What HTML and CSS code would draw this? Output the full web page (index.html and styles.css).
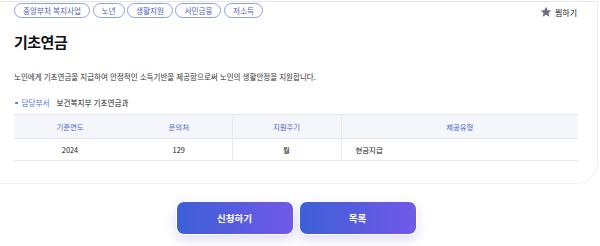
FILE: index.html
```html
<!DOCTYPE html>
<html lang="ko">
<head>
<meta charset="utf-8">
<link rel="stylesheet" href="styles.css">
</head>
<body>
<div class="card">
  <div class="content">
    <div class="top">
      <div class="tags">
        <span class="tag">중앙부처 복지사업</span>
        <span class="tag">노년</span>
        <span class="tag">생활지원</span>
        <span class="tag">서민금융</span>
        <span class="tag">저소득</span>
      </div>
      <div class="fav">
        <svg class="star" viewBox="0 0 24 24" width="12" height="12"><path d="M12 1.5l3.2 7 7.3.7-5.5 4.9 1.6 7.4L12 17.7l-6.6 3.8 1.6-7.4L1.5 9.2l7.3-.7z" fill="#6b6f82"/></svg>
        <span>찜하기</span>
      </div>
    </div>
    <h1 class="title">기초연금</h1>
    <p class="desc">노인에게 기초연금을 지급하여 안정적인 소득기반을 제공함으로써 노인의 생활안정을 지원합니다.</p>
    <div class="dept"><span class="dot"></span><span class="dept-label">담당부서</span><span class="dept-name">보건복지부 기초연금과</span></div>
    <table class="info">
      <colgroup><col class="c1"><col class="c2"><col class="c3"><col class="c4"></colgroup>
      <thead>
        <tr><th>기준연도</th><th>문의처</th><th class="bl">지원주기</th><th class="bl">제공유형</th></tr>
      </thead>
      <tbody>
        <tr><td>2024</td><td>129</td><td class="bl">월</td><td class="bl left">현금지급</td></tr>
      </tbody>
    </table>
  </div>
</div>
<div class="actions">
  <button class="btn">신청하기</button>
  <button class="btn">목록</button>
</div>
</body>
</html>
```

FILE: styles.css
```css
* { box-sizing: border-box; margin: 0; padding: 0; }
html, body { background: #fff; }
body {
  width: 600px;
  height: 246px;
  overflow: hidden;
  font-family: "Noto Sans CJK KR", "Noto Sans", sans-serif;
  color: #222;
}
.card {
  margin-top: 1px;
  width: 598px;
  height: 183px;
  border-top: 1px solid #e4e6ea;
  border-right: 1px solid #eceef2;
  border-bottom: 1px solid #f1f2f5;
  border-bottom-right-radius: 22px;
}
.content {
  padding: 1px 19px 0 14px;
}
.top {
  display: flex;
  justify-content: space-between;
  align-items: flex-start;
}
.tags {
  display: flex;
  gap: 2.5px;
}
.tag {
  display: inline-flex;
  align-items: center;
  height: 15px;
  padding: 0 8px;
  border: 1px solid #8ea1e6;
  border-radius: 8px;
  font-size: 7.6px;
  color: #4c5fb8;
  line-height: 1;
}
.fav {
  display: flex;
  align-items: center;
  gap: 3px;
  margin-top: 3px;
  margin-right: 1px;
  font-size: 8px;
  color: #222;
}
.star { display: block; }
.title {
  margin-top: 14px;
  font-size: 15px;
  font-weight: 700;
  line-height: 20px;
  letter-spacing: -0.5px;
  color: #111;
}
.desc {
  margin-top: 20px;
  font-size: 7.5px;
  line-height: 10px;
  color: #333;
}
.dept {
  display: flex;
  align-items: center;
  margin-top: 16px;
  font-size: 7.6px;
  line-height: 10px;
}
.dot {
  width: 2.5px;
  height: 2.5px;
  border-radius: 50%;
  background: #4a6cf0;
  margin: 0 4px 0 1px;
}
.dept-label { color: #4a6ce8; margin-right: 7px; }
.dept-name { color: #222; }
.info {
  margin-top: 6px;
  width: 564px;
  border-collapse: collapse;
  font-size: 7.4px;
}
.c1 { width: 112px; }
.c2 { width: 106px; }
.c3 { width: 109px; }
.info thead tr { background: #f4f6fb; }
.info th {
  height: 24px;
  font-weight: 400;
  color: #4a63cf;
  border-top: 1.5px solid #e5e7eb;
  border-bottom: 1px solid #e3e5ea;
}
.info td {
  height: 22px;
  text-align: center;
  color: #222;
  border-bottom: 1px solid #e5e7eb;
}
.info .bl { border-left: 1px solid #e7e9ee; }
.info td.left { text-align: left; padding-left: 14px; }
.actions {
  display: flex;
  justify-content: center;
  gap: 5px;
  width: 592px;
  margin-top: 17px;
}
.btn {
  width: 118px;
  height: 34px;
  border: 1px solid #fff;
  border-radius: 8px;
  background: linear-gradient(90deg, #3d5fd6 0%, #7159e8 100%);
  color: #fff;
  font-family: "Noto Sans CJK KR", sans-serif;
  font-size: 9.5px;
  font-weight: 700;
  box-shadow: 0 5px 12px rgba(110, 100, 230, 0.22);
}
```
